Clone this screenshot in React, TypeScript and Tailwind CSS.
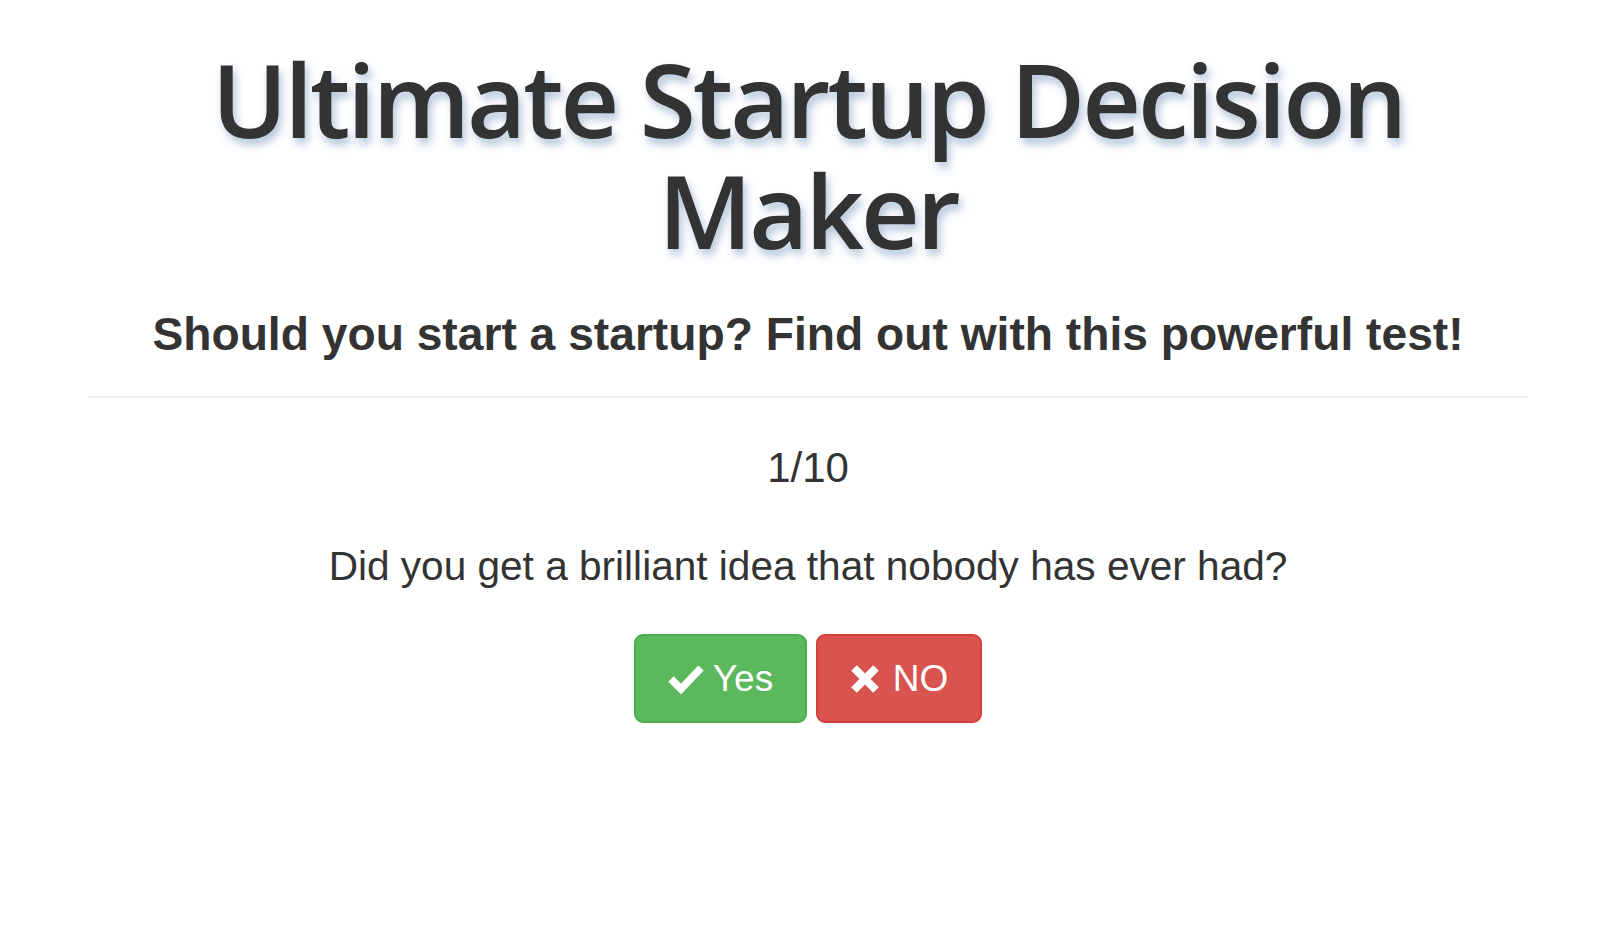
import React from 'react';

export default function App() {
  return (
    <div className="min-h-screen bg-white pl-[88px] pr-[78px] text-[#333] font-['Liberation_Sans',Arial,sans-serif]">
      {/* Title */}
      <h1 className="pt-[43px] text-center font-['Open_Sans',sans-serif] font-semibold text-[102px] leading-[111px] tracking-[-3px] [text-shadow:3px_6px_8px_rgba(40,90,150,0.35)]">
        Ultimate Startup Decision
        <br />
        Maker
      </h1>
      <h2 className="mt-[42px] text-center font-bold text-[46.2px] leading-[55px]">
        Should you start a startup? Find out with this powerful test!
      </h2>
      <hr className="mt-[34px] border-t-2 border-[#eeeeee]" />

      {/* Question */}
      <div className="mt-[46px] text-center text-[42px] leading-[48px]">1/10</div>
      <p className="mt-[50px] text-center text-[40.6px] leading-[48px]">
        Did you get a brilliant idea that nobody has ever had?
      </p>

      <div className="mt-[44px] flex justify-center gap-[9px]">
        <button className="flex h-[89px] w-[173px] items-center justify-center gap-[9px] rounded-[9px] border-2 border-[#4cae4c] bg-[#5cb85c] text-[37px] text-white">
          <svg width="36" height="30" viewBox="0 0 36 30">
            <polyline points="3,15 13,25 33,4" fill="none" stroke="white" strokeWidth="7.5" strokeLinejoin="miter" />
          </svg>
          <span>Yes</span>
        </button>
        <button className="flex h-[89px] w-[166px] items-center justify-center gap-[13px] rounded-[9px] border-2 border-[#d43f3a] bg-[#d9534f] text-[37px] text-white">
          <svg width="30" height="28" viewBox="0 0 30 28">
            <line x1="4" y1="3" x2="26" y2="25" stroke="white" strokeWidth="8" />
            <line x1="26" y1="3" x2="4" y2="25" stroke="white" strokeWidth="8" />
          </svg>
          <span>NO</span>
        </button>
      </div>
    </div>
  );
}
